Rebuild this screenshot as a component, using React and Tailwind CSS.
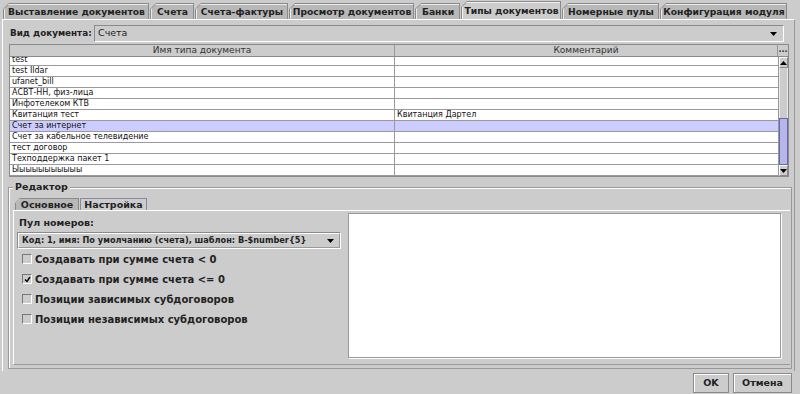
import React from 'react';

const tabs = [
  { label: 'Выставление документов', w: 'w-[146px]' },
  { label: 'Счета', w: 'w-[44px]' },
  { label: 'Счета-фактуры', w: 'w-[93px]' },
  { label: 'Просмотр документов', w: 'w-[125px]' },
  { label: 'Банки', w: 'w-[45px]' },
  { label: 'Типы документов', w: 'w-[100px]', active: true },
  { label: 'Номерные пулы', w: 'w-[97px]' },
  { label: 'Конфигурация модуля', w: 'w-[127px]' },
];

const rows = [
  ['test', ''],
  ['test Ildar', ''],
  ['ufanet_bill', ''],
  ['АСВТ-НН, физ-лица', ''],
  ['Инфотелеком КТВ', ''],
  ['Квитанция тест', 'Квитанция Дартел'],
  ['Счет за интернет', '', true],
  ['Счет за кабельное телевидение', ''],
  ['тест договор', ''],
  ['Техподдержка пакет 1', ''],
  ['Ыыыыыыыыыыы', ''],
];

const checks = [
  ['Создавать при сумме счета < 0', false],
  ['Создавать при сумме счета <= 0', true],
  ['Позиции зависимых субдоговоров', false],
  ['Позиции независимых субдоговоров', false],
];

const Tab = ({ label, w, active }) => (
  <div
    className={`${w} ${active ? 'h-[18px]' : 'h-[16px]'} bg-[#8a8a8a] p-px pb-0 [clip-path:polygon(6px_0,100%_0,100%_100%,0_100%,0_6px)]`}
  >
    <div
      className={`h-full ${active ? 'bg-[#cccccc]' : 'bg-[#b8b8b8]'} border-t border-l border-white/70 [clip-path:polygon(5px_0,100%_0,100%_100%,0_100%,0_5px)] flex items-center justify-center text-[9.2px] font-bold text-[#222] leading-none whitespace-nowrap`}
    >
      {label}
    </div>
  </div>
);

const Arrow = ({ up }) => (
  <svg width="7" height="4" viewBox="0 0 7 4" className="block">
    {up ? <polygon points="3.5,0 7,4 0,4" fill="#000" /> : <polygon points="0,0 7,0 3.5,4" fill="#000" />}
  </svg>
);

export default function App() {
  return (
    <div className="w-[800px] h-[394px] bg-[#cccccc] overflow-hidden flex flex-col font-['DejaVu_Sans',sans-serif] text-[#222]">
      {/* top tab strip */}
      <div className="h-[19px] flex items-end pl-[3px] gap-px">
        {tabs.map((t) => (
          <Tab key={t.label} {...t} />
        ))}
      </div>

      {/* tab content */}
      <div className="ml-[2px] mr-[5px] h-[352px] border-t border-l border-white border-r border-r-[#999] flex flex-col">
        <div className="mt-[5px] h-[17px] flex items-center pl-[7px]">
          <span className="w-[84px] text-[8.8px] font-bold whitespace-nowrap">Вид документа:</span>
          <div className="w-[690px] h-[17px] border border-t-[#8a8a8a] border-l-[#8a8a8a] border-b-white border-r-white flex items-center px-[3px] text-[9.5px]">
            <span className="flex-1">Счета</span>
            <Arrow />
            <span className="w-[3px]" />
          </div>
        </div>

        {/* table */}
        <div className="mt-[2px] ml-[6px] w-[780px] h-[133px] border border-[#8a8a8a] flex flex-col">
          <div className="h-[12px] flex bg-[#cccccc] border-b border-[#8a8a8a] text-[9px] leading-[11px] text-[#333]">
            <div className="w-[385px] border-r border-[#999] text-center">Имя типа документа</div>
            <div className="w-[383px] border-r border-[#999] text-center">Комментарий</div>
            <div className="flex-1 text-center text-[8px] leading-[9px] font-bold">...</div>
          </div>
          <div className="flex-1 flex overflow-hidden">
            <div className="w-[768px] bg-white overflow-hidden">
              <div className="-mt-[2px]">
                {rows.map(([a, b, sel]) => (
                  <div
                    key={a}
                    className={`h-[11px] flex border-b border-[#9a9a9a] text-[8px] leading-[10px] text-[#111] ${sel ? 'bg-[#ccccff]' : ''}`}
                  >
                    <div className="w-[385px] pl-[2px] border-r border-[#9a9a9a] whitespace-nowrap">{a}</div>
                    <div className="flex-1 pl-[2px] whitespace-nowrap">{b}</div>
                  </div>
                ))}
              </div>
            </div>
            {/* scrollbar */}
            <div className="flex-1 flex flex-col bg-[#cccccc] border-l border-[#999]">
              <div className="h-[11px] flex items-center justify-center border border-t-white border-l-white border-b-[#8a8a8a] border-r-[#8a8a8a]">
                <Arrow up />
              </div>
              <div className="flex-1 flex flex-col border-x border-white/60">
                <div className="flex-1" />
                <div className="h-[47px] -mx-px bg-[#9c9cd4] border border-[#6666aa] bg-[radial-gradient(#d4d4ff_0.6px,transparent_0.8px)] bg-[length:2px_2px]" />
              </div>
              <div className="h-[11px] flex items-center justify-center border border-t-white border-l-white border-b-[#8a8a8a] border-r-[#8a8a8a]">
                <Arrow />
              </div>
            </div>
          </div>
        </div>

        {/* editor group */}
        <div className="relative mt-[10px] ml-[5px] w-[784px] h-[182px] border border-[#999] shadow-[inset_1px_1px_0_#fff] flex flex-col">
          <span className="absolute -top-[7px] left-[4px] px-[2px] bg-[#cccccc] text-[9.5px] font-bold leading-[12px]">Редактор</span>

          <div className="mt-[10px] ml-[6px] flex items-end h-[12px]">
            <div className="w-[64px] h-[12px] bg-[#8a8a8a] p-px pb-0 [clip-path:polygon(5px_0,100%_0,100%_100%,0_100%,0_5px)]">
              <div className="h-full bg-[#b8b8b8] flex items-center justify-center text-[9.5px] font-bold leading-none">Основное</div>
            </div>
            <div className="ml-[1px] w-[67px] h-[12px] border border-[#8888a8] border-b-0 bg-[#cccccc] flex items-center justify-center text-[9.5px] font-bold leading-none">
              Настройка
            </div>
          </div>

          <div className="ml-[4px] mr-[1px] h-[155px] border-t border-l border-white border-b border-b-[#999] flex">
            <div className="w-[331px] pl-[3px] pt-[5px] flex flex-col">
              <div className="h-[14px] pl-[2px] text-[9.5px] font-bold leading-[14px]">Пул номеров:</div>
              <div className="mt-[2px] w-[324px] h-[17px] border border-t-[#8a8a8a] border-l-[#8a8a8a] border-b-white border-r-white flex">
                <div className="flex-1 border border-t-white border-l-white border-b-[#999] border-r-[#999] flex items-center pl-[3px] pr-[5px] text-[8.2px] font-bold whitespace-nowrap overflow-hidden">
                  <span className="flex-1">Код: 1, имя: По умолчанию (счета), шаблон: B-$number{'{5}'}</span>
                  <Arrow />
                </div>
              </div>
              <div className="flex flex-col">
                {checks.map(([label, on]) => (
                  <div key={label} className="h-[20px] flex items-center pl-[5px] gap-[3px]">
                    <div className="w-[10px] h-[10px] border border-t-[#777] border-l-[#777] border-b-white border-r-white bg-[#cccccc] flex items-center justify-center">
                      {on && (
                        <svg width="7" height="7" viewBox="0 0 7 7">
                          <path d="M1 3.5 L3 5.5 L6 1" stroke="#000" strokeWidth="1.4" fill="none" />
                        </svg>
                      )}
                    </div>
                    <span className="text-[10px] font-bold">{label}</span>
                  </div>
                ))}
              </div>
            </div>
            <div className="mt-[2px] ml-[3px] w-[433px] h-[145px] bg-white border border-[#999] shadow-[1px_1px_0_#fff]" />
          </div>
        </div>
      </div>

      {/* buttons */}
      <div className="flex-1 flex items-start justify-end gap-[4px] pr-[8px] pt-[2px]">
        <button className="w-[36px] h-[20px] border border-[#8a8a8a] shadow-[inset_1px_1px_0_#fff] bg-[#cccccc] text-[9.5px] font-bold">OK</button>
        <button className="w-[59px] h-[20px] border border-[#8a8a8a] shadow-[inset_1px_1px_0_#fff] bg-[#cccccc] text-[9.5px] font-bold">Отмена</button>
      </div>
    </div>
  );
}
